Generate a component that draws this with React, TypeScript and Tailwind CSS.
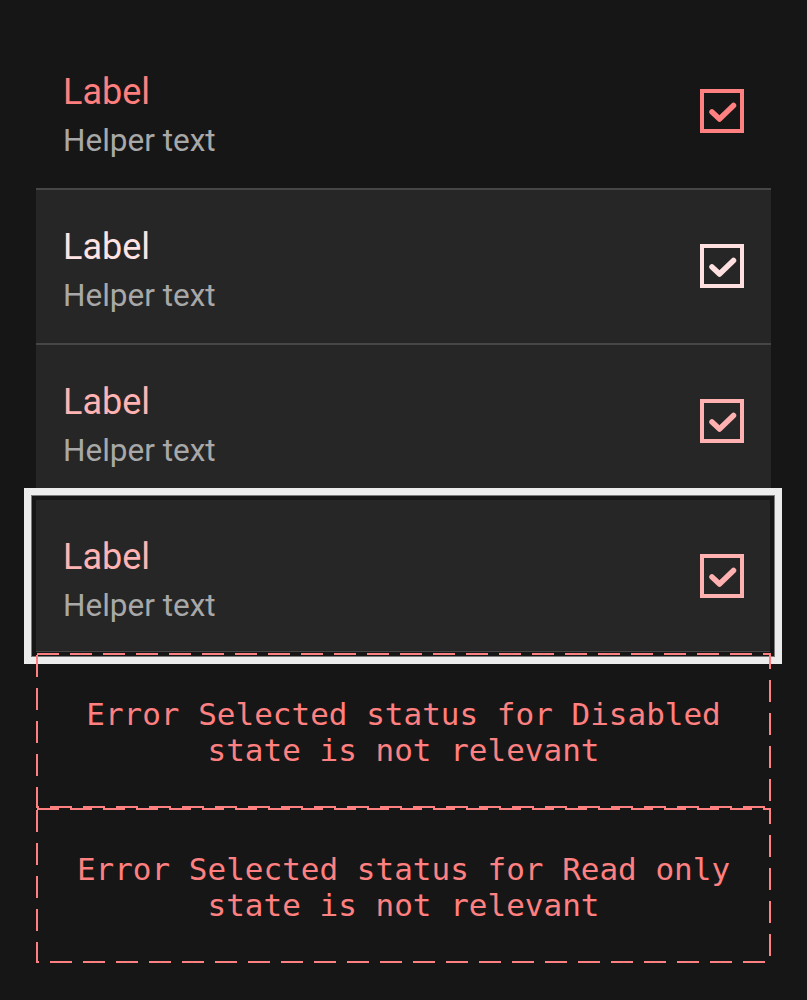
import React from "react";

function CheckBox({ color }: { color: string }) {
  return (
    <svg width="44" height="44" viewBox="0 0 44 44" fill="none">
      <rect x="2" y="2" width="40" height="40" stroke={color} strokeWidth="4" />
      <path d="M12 23 L19.5 30 L33.5 16.5" stroke={color} strokeWidth="5.5" strokeLinecap="round" strokeLinejoin="round" />
    </svg>
  );
}

function Row({
  labelColor,
  boxColor,
  bg,
  border,
  children,
}: {
  labelColor: string;
  boxColor: string;
  bg: boolean;
  border: boolean;
  children?: React.ReactNode;
}) {
  return (
    <div
      className={
        "relative h-[155px] flex items-start justify-between pl-[27px] pr-[27px] " +
        (bg ? "bg-[#262626] " : "") +
        (border ? "border-t-2 border-[#464646] pt-[33px]" : "pt-[35px]")
      }
    >
      <div className="flex flex-col gap-[1px]">
        <div className="text-[36px] leading-[48px]" style={{ color: labelColor, fontFamily: "Roboto, sans-serif" }}>
          Label
        </div>
        <div className="text-[31.5px] leading-[48px] text-[#a8a8a8]" style={{ fontFamily: "Roboto, sans-serif" }}>
          Helper text
        </div>
      </div>
      <div className="mt-[21px]">
        <CheckBox color={boxColor} />
      </div>
      {children}
    </div>
  );
}

function ErrorBox({ text }: { text: string }) {
  return (
    <div className="relative h-[155px] flex items-center justify-center">
      <svg className="absolute inset-0" width="735" height="155" viewBox="0 0 735 155" fill="none">
        <rect x="1" y="1" width="733" height="153" stroke="#ff8080" strokeWidth="2" strokeDasharray="22 11" />
      </svg>
      <div
        className="text-center text-[31px] leading-[36px] text-[#ff8080] pt-[2px]"
        style={{ fontFamily: '"DejaVu Sans Mono", monospace' }}
      >
        {text}
      </div>
    </div>
  );
}

export default function App() {
  return (
    <div className="w-full h-[1000px] bg-[#161616] px-[36px] pt-[33px]">
      <Row labelColor="#ff7e7e" boxColor="#ff8080" bg={false} border={false} />
      <Row labelColor="#ffe3e3" boxColor="#ffe0e0" bg={true} border={true} />
      <Row labelColor="#ffb3b3" boxColor="#ffb0b0" bg={true} border={true} />
      <div className="relative">
        <Row labelColor="#ffb3b3" boxColor="#ffb0b0" bg={true} border={true}>
          <div className="absolute left-0 right-0 bottom-0 h-[2px] bg-[#464646]" />
        </Row>
        <div className="absolute top-[-10px] left-[-12px] right-[-11px] bottom-[-11px] border-[7px] border-[#ececec]">
          <div className="absolute inset-0 border border-[#7a7a7a]">
            <div className="absolute inset-0 border-4 border-[#161616]" />
          </div>
        </div>
      </div>
      <ErrorBox text="Error Selected status for Disabled state is not relevant" />
      <ErrorBox text="Error Selected status for Read only state is not relevant" />
    </div>
  );
}
